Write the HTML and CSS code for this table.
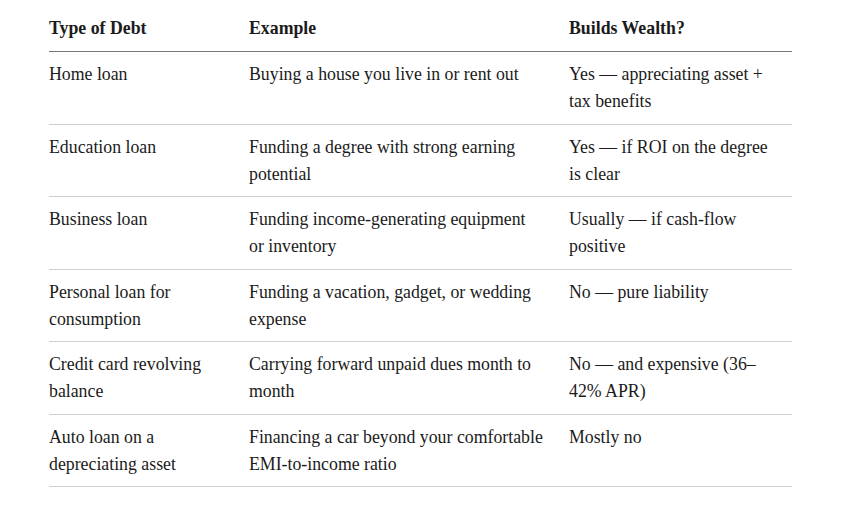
FILE: index.html
```html
<!DOCTYPE html>
<html lang="en">
<head>
<meta charset="utf-8">
<title>Types of Debt</title>
<link rel="stylesheet" href="styles.css">
</head>
<body>
<div class="page">
  <table class="debt-table">
    <colgroup>
      <col class="col-type">
      <col class="col-example">
      <col class="col-wealth">
    </colgroup>
    <thead>
      <tr>
        <th>Type of Debt</th>
        <th class="example">Example</th>
        <th>Builds Wealth?</th>
      </tr>
    </thead>
    <tbody>
      <tr>
        <td>Home loan</td>
        <td class="example">Buying a house you live in or rent out</td>
        <td>Yes — appreciating asset + tax benefits</td>
      </tr>
      <tr>
        <td>Education loan</td>
        <td class="example">Funding a degree with strong earning potential</td>
        <td>Yes — if ROI on the degree is clear</td>
      </tr>
      <tr>
        <td>Business loan</td>
        <td class="example">Funding income-generating equipment or inventory</td>
        <td>Usually — if cash-flow positive</td>
      </tr>
      <tr>
        <td>Personal loan for consumption</td>
        <td class="example">Funding a vacation, gadget, or wedding expense</td>
        <td>No — pure liability</td>
      </tr>
      <tr>
        <td>Credit card revolving balance</td>
        <td class="example">Carrying forward unpaid dues month to month</td>
        <td>No — and expensive (36–42% APR)</td>
      </tr>
      <tr>
        <td>Auto loan on a depreciating asset</td>
        <td class="example">Financing a car beyond your comfortable EMI-to-income ratio</td>
        <td>Mostly no</td>
      </tr>
    </tbody>
  </table>
</div>
</body>
</html>
```

FILE: styles.css
```css
html, body {
  margin: 0;
  padding: 0;
  background: #ffffff;
}

.page {
  padding: 6px 52px 0 49px;
}

.debt-table {
  width: 743px;
  border-collapse: collapse;
  table-layout: fixed;
  font-family: "Liberation Serif", "Times New Roman", serif;
  font-size: 17.8px;
  line-height: 27px;
  color: #1b1b1b;
}

.col-type { width: 200px; }
.col-example { width: 320px; }
.col-wealth { width: 223px; }

.debt-table th {
  text-align: left;
  font-weight: 700;
  padding: 9px 16px 9px 0;
  border-bottom: 1px solid #767676;
  vertical-align: top;
}

.debt-table td {
  padding: 9px 16px 8.5px 0;
  border-bottom: 1px solid #cfcfcf;
  vertical-align: top;
}

.debt-table .example {
  padding-right: 25px;
}
```
